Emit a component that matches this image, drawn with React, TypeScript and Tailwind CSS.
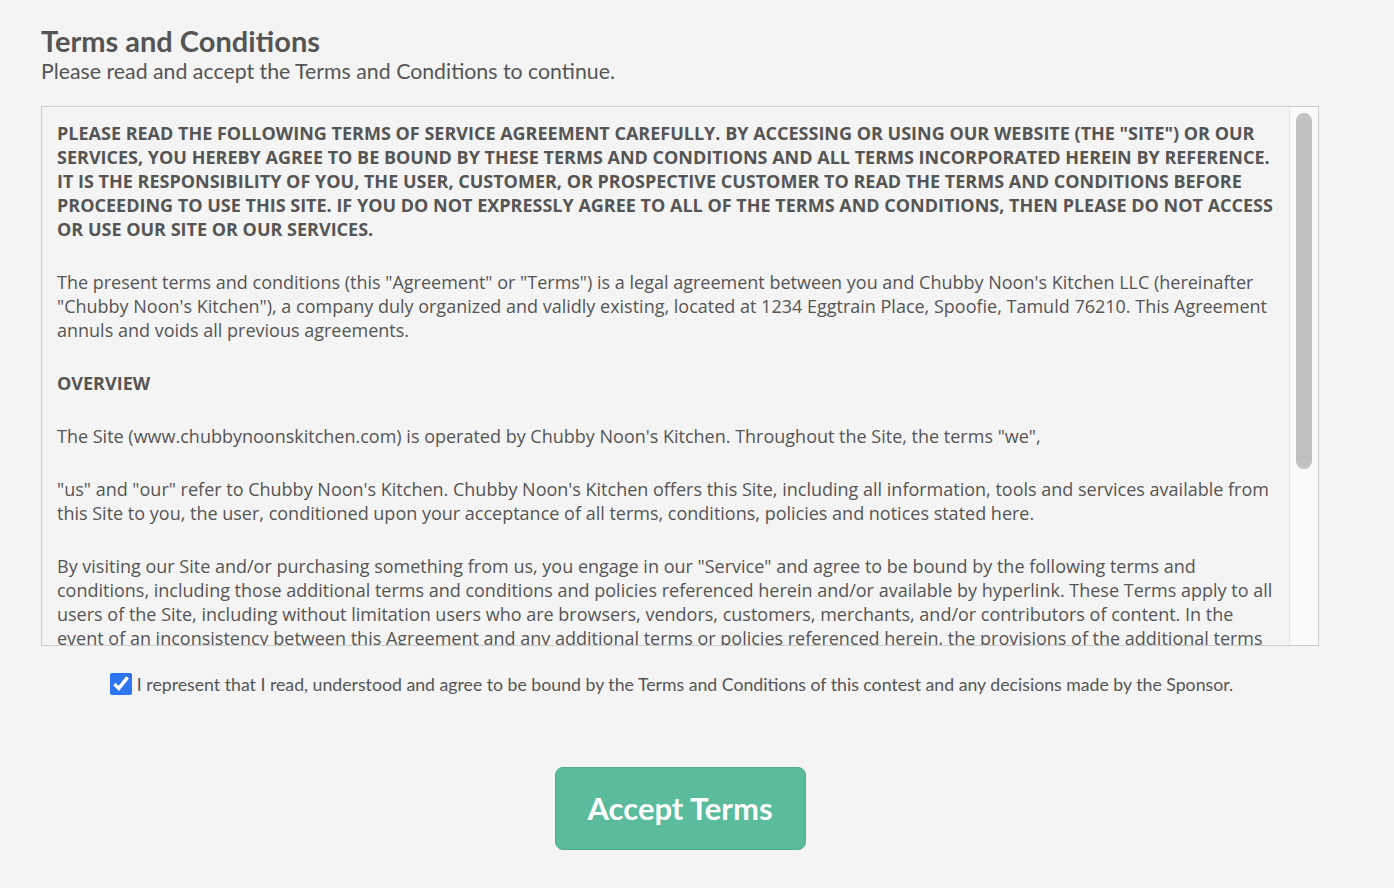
import React, { useState } from 'react';

const paragraphs: { bold?: boolean; text: string }[] = [
  {
    bold: true,
    text: 'PLEASE READ THE FOLLOWING TERMS OF SERVICE AGREEMENT CAREFULLY. BY ACCESSING OR USING OUR WEBSITE (THE "SITE") OR OUR SERVICES, YOU HEREBY AGREE TO BE BOUND BY THESE TERMS AND CONDITIONS AND ALL TERMS INCORPORATED HEREIN BY REFERENCE. IT IS THE RESPONSIBILITY OF YOU, THE USER, CUSTOMER, OR PROSPECTIVE CUSTOMER TO READ THE TERMS AND CONDITIONS BEFORE PROCEEDING TO USE THIS SITE. IF YOU DO NOT EXPRESSLY AGREE TO ALL OF THE TERMS AND CONDITIONS, THEN PLEASE DO NOT ACCESS OR USE OUR SITE OR OUR SERVICES.',
  },
  {
    text: 'The present terms and conditions (this "Agreement" or "Terms") is a legal agreement between you and Chubby Noon\'s Kitchen LLC (hereinafter "Chubby Noon\'s Kitchen"), a company duly organized and validly existing, located at 1234 Eggtrain Place, Spoofie, Tamuld 76210. This Agreement annuls and voids all previous agreements.',
  },
  { bold: true, text: 'OVERVIEW' },
  {
    text: 'The Site (www.chubbynoonskitchen.com) is operated by Chubby Noon\'s Kitchen. Throughout the Site, the terms "we",',
  },
  {
    text: '"us" and "our" refer to Chubby Noon\'s Kitchen. Chubby Noon\'s Kitchen offers this Site, including all information, tools and services available from this Site to you, the user, conditioned upon your acceptance of all terms, conditions, policies and notices stated here.',
  },
  {
    text: 'By visiting our Site and/or purchasing something from us, you engage in our "Service" and agree to be bound by the following terms and conditions, including those additional terms and conditions and policies referenced herein and/or available by hyperlink. These Terms apply to all users of the Site, including without limitation users who are browsers, vendors, customers, merchants, and/or contributors of content. In the event of an inconsistency between this Agreement and any additional terms or policies referenced herein, the provisions of the additional terms and policies shall control.',
  },
  {
    text: 'Please read these Terms carefully before accessing or using our Site. By accessing or using any part of the Site, you agree to be bound by these Terms. If you do not agree to all the terms and conditions of this Agreement, then you may not access the Site or use any services.',
  },
];

const App = () => {
  const [agreed, setAgreed] = useState(true);

  return (
    <div className="min-h-[888px] bg-[#f4f4f4] font-['Lato',sans-serif] text-[#555555]">
      <div className="ml-[41px] w-[1278px] pt-[23px]">
        <h1 className="text-[29px] font-bold leading-[36px] text-[#555555]">Terms and Conditions</h1>
        <p className="text-[21.3px] leading-[24px] text-[#555555]">
          Please read and accept the Terms and Conditions to continue.
        </p>

        {/* Terms box */}
        <div className="mt-[23px] flex h-[540px] border border-[#cccccc] bg-[#f4f4f4]">
          <div className="flex-1 overflow-hidden pl-[15px] pr-[12px] pt-[14px] font-['Open_Sans',sans-serif] text-[18px] leading-[24px] text-[#555555]">
            {paragraphs.map((p, i) => (
              <p key={i} className={`mb-[29px] ${p.bold ? 'font-bold' : ''}`}>
                {p.text}
              </p>
            ))}
          </div>
          <div className="w-[29px] shrink-0 border-l border-[#e6e6e6] bg-[#fafafa] pl-[6px] pt-[6px]">
            <div className="h-[356px] w-[16px] rounded-full bg-[#c1c1c1]" />
          </div>
        </div>

        {/* Agreement */}
        <label className="mt-[25px] flex items-center justify-center pr-[17px] text-[17.7px] leading-[24px] text-[#555555]">
          <input
            type="checkbox"
            checked={agreed}
            onChange={(e) => setAgreed(e.target.checked)}
            className="mr-[5px] h-[22px] w-[22px] shrink-0 accent-[#2f74f0]"
          />
          <span className="whitespace-nowrap pt-[2px]">
            I represent that I read, understood and agree to be bound by the Terms and Conditions of this contest and any decisions made by the Sponsor.
          </span>
        </label>

        <div className="mt-[70px] flex justify-center">
          <button className="h-[83px] w-[251px] rounded-[8px] border border-[#4fae8f] bg-[#5abb9d] text-[31px] font-bold text-white">
            Accept Terms
          </button>
        </div>
      </div>
    </div>
  );
};

export default App;
